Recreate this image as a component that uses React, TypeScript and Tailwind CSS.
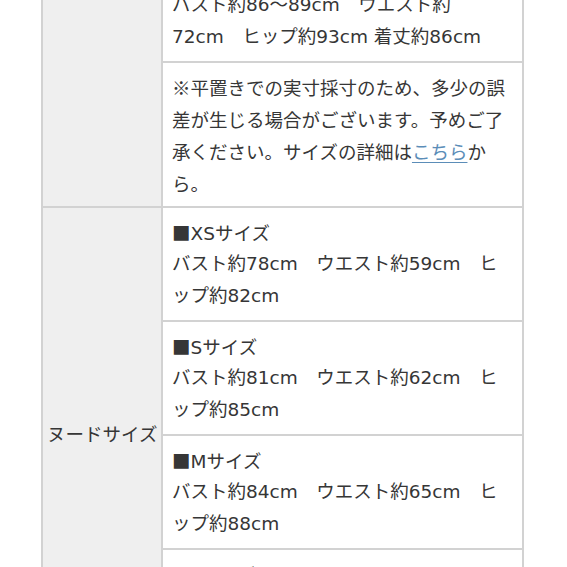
import React from "react";

const font = { fontFamily: '"DejaVu Sans", "Noto Sans CJK JP", sans-serif' };
const cjk = { fontFamily: '"Noto Sans CJK JP", sans-serif' };

function Lines({ lines }: { lines: React.ReactNode[] }) {
  return (
    <>
      {lines.map((l, i) => (
        <div key={i} className="whitespace-nowrap h-[32px]">
          {l}
        </div>
      ))}
    </>
  );
}

const sizes = [
  { name: "XS", bust: "78", waist: "59", hip: "82" },
  { name: "S", bust: "81", waist: "62", hip: "85" },
  { name: "M", bust: "84", waist: "65", hip: "88" },
  { name: "L", bust: "87", waist: "68", hip: "91" },
];

export default function App() {
  return (
    <div
      className="w-[567px] h-[567px] overflow-hidden bg-white text-[#363636] text-[18.5px] leading-[32px]"
      style={font}
    >
      <div className="-mt-[11px] ml-[41px] w-[483px] border-x-2 border-[#d2d2d2]">
        {/* Row A */}
        <div className="flex">
          <div className="w-[118px] shrink-0 bg-[#efefef]" />
          <div className="flex-1 border-l-2 border-[#d2d2d2]">
            <div className="pl-[9px] pb-2">
              <Lines
                lines={[
                  "バスト約86〜89cm　ウエスト約",
                  "72cm　ヒップ約93cm 着丈約86cm",
                ]}
              />
            </div>
            <div className="border-t-2 border-[#d2d2d2] pl-[9px] pt-2 pb-[7px]" style={cjk}>
              <Lines
                lines={[
                  "※平置きでの実寸採寸のため、多少の誤",
                  "差が生じる場合がございます。予めご了",
                  <>
                    承ください。サイズの詳細は
                    <span className="text-[#5b8db8] underline underline-offset-[3px] decoration-1">
                      こちら
                    </span>
                    か
                  </>,
                  "ら。",
                ]}
              />
            </div>
          </div>
        </div>
        {/* Row B */}
        <div className="flex border-t-2 border-[#d2d2d2]">
          <div className="w-[118px] shrink-0 bg-[#efefef] flex items-center pl-[4px] whitespace-nowrap">
            ヌードサイズ
          </div>
          <div className="flex-1 border-l-2 border-[#d2d2d2]">
            {sizes.map((s, i) => (
              <div
                key={s.name}
                className={
                  i === 0
                    ? "pl-[9px] py-2"
                    : "pl-[9px] py-2 border-t-2 border-[#d2d2d2]"
                }
              >
                <Lines
                  lines={[
                    <>
                      <span style={cjk}>■</span>
                      {`${s.name}サイズ`}
                    </>,
                    `バスト約${s.bust}cm　ウエスト約${s.waist}cm　ヒ`,
                    `ップ約${s.hip}cm`,
                  ]}
                />
              </div>
            ))}
          </div>
        </div>
      </div>
    </div>
  );
}
